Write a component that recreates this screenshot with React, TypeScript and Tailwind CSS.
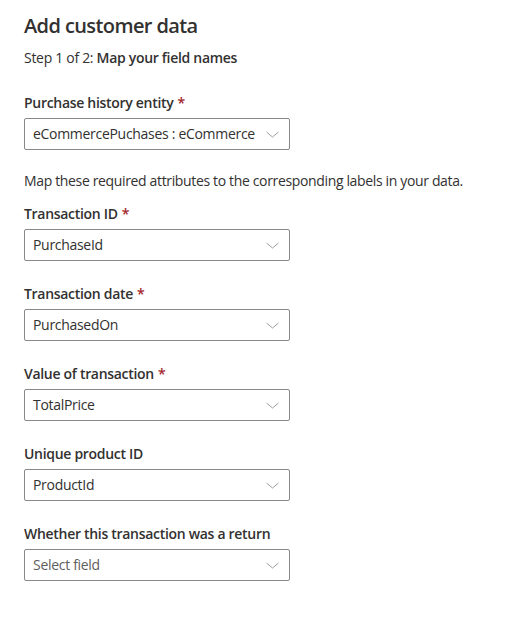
import { useState } from "react";

type Field = {
  label: string;
  required?: boolean;
  value?: string;
  placeholder?: string;
};

const FIELDS: Field[] = [
  { label: "Transaction ID", required: true, value: "PurchaseId" },
  { label: "Transaction date", required: true, value: "PurchasedOn" },
  { label: "Value of transaction", required: true, value: "TotalPrice" },
  { label: "Unique product ID", value: "ProductId" },
  { label: "Whether this transaction was a return", placeholder: "Select field" },
];

function Chevron() {
  return (
    <svg width="13" height="7" viewBox="0 0 13 7" className="shrink-0">
      <path d="M0.5 1 L6.5 6 L12.5 1" fill="none" stroke="#a19f9d" strokeWidth="1" />
    </svg>
  );
}

function Dropdown({ value, placeholder }: { value?: string; placeholder?: string }) {
  return (
    <button
      type="button"
      className="flex h-8 w-[266px] items-center justify-between rounded-[2px] border border-[#8a8886] bg-white pl-2 pr-[10px] text-left text-[14px] leading-5 tracking-[-0.3px]"
    >
      <span className={value ? "text-[#323130]" : "text-[#605e5c]"}>{value ?? placeholder}</span>
      <Chevron />
    </button>
  );
}

function Label({ text, required }: { text: string; required?: boolean }) {
  return (
    <div className="py-[5px] text-[14px] font-semibold leading-5 tracking-[-0.3px] text-[#323130]">
      {text}
      {required && <span className="pl-1 text-[#a4262c]">*</span>}
    </div>
  );
}

export default function App() {
  const [fields] = useState(FIELDS);

  return (
    <div
      className="min-h-[633px] bg-white px-6 pt-3 text-[#323130]"
      style={{ fontFamily: '"Segoe UI", "Open Sans", "Noto Sans", sans-serif' }}
    >
      <h1 className="text-[20px] font-semibold leading-7 tracking-[-0.6px]">Add customer data</h1>
      <p className="mt-2 text-[14px] leading-5 tracking-[-0.3px]">
        Step 1 of 2: <span className="font-semibold">Map your field names</span>
      </p>

      <div className="mt-5">
        <Label text="Purchase history entity" required />
        <Dropdown value="eCommercePuchases : eCommerce" />
      </div>

      <p className="mt-[21px] text-[14px] leading-5 tracking-[-0.35px]">
        Map these required attributes to the corresponding labels in your data.
      </p>

      <div className="mt-2 flex flex-col gap-[18px]">
        {fields.map((f) => (
          <div key={f.label}>
            <Label text={f.label} required={f.required} />
            <Dropdown value={f.value} placeholder={f.placeholder} />
          </div>
        ))}
      </div>
    </div>
  );
}
